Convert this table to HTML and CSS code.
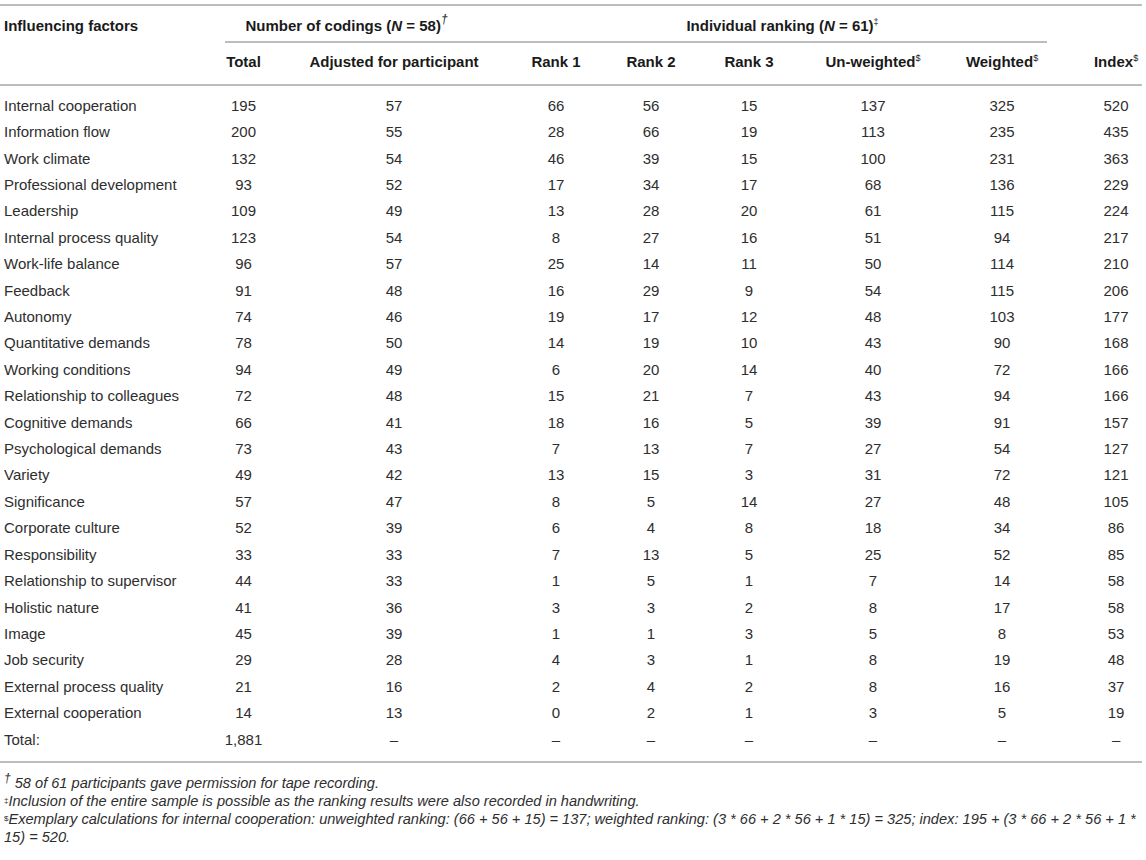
FILE: index.html
```html
<!DOCTYPE html>
<html lang="en">
<head>
<meta charset="utf-8">
<title>Influencing factors</title>
<link rel="stylesheet" href="styles.css">
</head>
<body>
<div class="page">
<table class="data">
  <colgroup>
    <col class="c-name"><col class="c-total"><col class="c-adj"><col class="c-r1"><col class="c-r2"><col class="c-r3"><col class="c-uw"><col class="c-w"><col class="c-idx">
  </colgroup>
  <thead>
    <tr class="h1">
      <th class="name" rowspan="2">Influencing factors</th>
      <th class="group" colspan="7">
        <div class="groupline">
          <span class="g1">Number of codings (<i>N</i> = 58)<sup class="dag">†</sup></span>
          <span class="g2">Individual ranking (<i>N</i> = 61)<sup>‡</sup></span>
        </div>
      </th>
      <th class="blank"></th>
    </tr>
    <tr class="h2">
      <th>Total</th>
      <th>Adjusted for participant</th>
      <th>Rank 1</th>
      <th>Rank 2</th>
      <th>Rank 3</th>
      <th>Un-weighted<sup>$</sup></th>
      <th>Weighted<sup>$</sup></th>
      <th>Index<sup>$</sup></th>
    </tr>
  </thead>
  <tbody>
    <tr><td>Internal cooperation</td><td>195</td><td>57</td><td>66</td><td>56</td><td>15</td><td>137</td><td>325</td><td>520</td></tr>
    <tr><td>Information flow</td><td>200</td><td>55</td><td>28</td><td>66</td><td>19</td><td>113</td><td>235</td><td>435</td></tr>
    <tr><td>Work climate</td><td>132</td><td>54</td><td>46</td><td>39</td><td>15</td><td>100</td><td>231</td><td>363</td></tr>
    <tr><td>Professional development</td><td>93</td><td>52</td><td>17</td><td>34</td><td>17</td><td>68</td><td>136</td><td>229</td></tr>
    <tr><td>Leadership</td><td>109</td><td>49</td><td>13</td><td>28</td><td>20</td><td>61</td><td>115</td><td>224</td></tr>
    <tr><td>Internal process quality</td><td>123</td><td>54</td><td>8</td><td>27</td><td>16</td><td>51</td><td>94</td><td>217</td></tr>
    <tr><td>Work-life balance</td><td>96</td><td>57</td><td>25</td><td>14</td><td>11</td><td>50</td><td>114</td><td>210</td></tr>
    <tr><td>Feedback</td><td>91</td><td>48</td><td>16</td><td>29</td><td>9</td><td>54</td><td>115</td><td>206</td></tr>
    <tr><td>Autonomy</td><td>74</td><td>46</td><td>19</td><td>17</td><td>12</td><td>48</td><td>103</td><td>177</td></tr>
    <tr><td>Quantitative demands</td><td>78</td><td>50</td><td>14</td><td>19</td><td>10</td><td>43</td><td>90</td><td>168</td></tr>
    <tr><td>Working conditions</td><td>94</td><td>49</td><td>6</td><td>20</td><td>14</td><td>40</td><td>72</td><td>166</td></tr>
    <tr><td>Relationship to colleagues</td><td>72</td><td>48</td><td>15</td><td>21</td><td>7</td><td>43</td><td>94</td><td>166</td></tr>
    <tr><td>Cognitive demands</td><td>66</td><td>41</td><td>18</td><td>16</td><td>5</td><td>39</td><td>91</td><td>157</td></tr>
    <tr><td>Psychological demands</td><td>73</td><td>43</td><td>7</td><td>13</td><td>7</td><td>27</td><td>54</td><td>127</td></tr>
    <tr><td>Variety</td><td>49</td><td>42</td><td>13</td><td>15</td><td>3</td><td>31</td><td>72</td><td>121</td></tr>
    <tr><td>Significance</td><td>57</td><td>47</td><td>8</td><td>5</td><td>14</td><td>27</td><td>48</td><td>105</td></tr>
    <tr><td>Corporate culture</td><td>52</td><td>39</td><td>6</td><td>4</td><td>8</td><td>18</td><td>34</td><td>86</td></tr>
    <tr><td>Responsibility</td><td>33</td><td>33</td><td>7</td><td>13</td><td>5</td><td>25</td><td>52</td><td>85</td></tr>
    <tr><td>Relationship to supervisor</td><td>44</td><td>33</td><td>1</td><td>5</td><td>1</td><td>7</td><td>14</td><td>58</td></tr>
    <tr><td>Holistic nature</td><td>41</td><td>36</td><td>3</td><td>3</td><td>2</td><td>8</td><td>17</td><td>58</td></tr>
    <tr><td>Image</td><td>45</td><td>39</td><td>1</td><td>1</td><td>3</td><td>5</td><td>8</td><td>53</td></tr>
    <tr><td>Job security</td><td>29</td><td>28</td><td>4</td><td>3</td><td>1</td><td>8</td><td>19</td><td>48</td></tr>
    <tr><td>External process quality</td><td>21</td><td>16</td><td>2</td><td>4</td><td>2</td><td>8</td><td>16</td><td>37</td></tr>
    <tr><td>External cooperation</td><td>14</td><td>13</td><td>0</td><td>2</td><td>1</td><td>3</td><td>5</td><td>19</td></tr>
    <tr><td>Total:</td><td>1,881</td><td>–</td><td>–</td><td>–</td><td>–</td><td>–</td><td>–</td><td>–</td></tr>
  </tbody>
</table>
<div class="notes">
  <p><sup class="dag">†</sup> 58 of 61 participants gave permission for tape recording.</p>
  <p><sup>‡</sup>Inclusion of the entire sample is possible as the ranking results were also recorded in handwriting.</p>
  <p><sup>$</sup>Exemplary calculations for internal cooperation: unweighted ranking: (66 + 56 + 15) = 137; weighted ranking: (3 * 66 + 2 * 56 + 1 * 15) = 325; index: 195 + (3 * 66 + 2 * 56 + 1 * 15) = 520.</p>
</div>
</div>
</body>
</html>
```

FILE: styles.css
```css
html, body {
  margin: 0;
  padding: 0;
  background: #ffffff;
}

.page {
  width: 1142px;
  padding-top: 4px;
  font-family: "Liberation Sans", Arial, Helvetica, sans-serif;
  color: #2e2e2e;
}

.data {
  width: 1142px;
  table-layout: fixed;
  border-collapse: collapse;
  border-top: 2px solid #bdbdbd;
  border-bottom: 2px solid #bdbdbd;
  font-size: 15px;
}

.c-name { width: 200px; }
.c-total { width: 87px; }
.c-adj { width: 214px; }
.c-r1 { width: 110px; }
.c-r2 { width: 80px; }
.c-r3 { width: 116px; }
.c-uw { width: 132px; }
.c-w { width: 151px; }
.c-idx { width: 52px; }

th {
  font-weight: bold;
  color: #1a1a1a;
  line-height: 18px;
  padding: 0;
  text-align: center;
  white-space: nowrap;
}

th.name {
  text-align: left;
  vertical-align: top;
  padding: 11px 0 0 4px;
  border-bottom: 2px solid #bdbdbd;
}

.h1 th.group,
.h1 th.blank {
  padding-top: 11px;
  vertical-align: top;
}

.groupline {
  display: flex;
  margin: 0 43px 0 25px;
  padding-bottom: 6px;
  border-bottom: 2px solid #bdbdbd;
}

.g1 {
  width: 243px;
  text-align: center;
}

.g2 {
  flex: 1;
  text-align: center;
  padding-left: 50px;
}

.h2 th {
  padding: 10px 0 13px;
  border-bottom: 2px solid #bdbdbd;
}

.h2 th:nth-child(7) {
  padding-right: 25px;
}

sup {
  font-size: 9px;
  line-height: 0;
  vertical-align: 6px;
  font-weight: normal;
}

sup.dag {
  font-style: italic;
  font-size: 12px;
  vertical-align: 8px;
}

td {
  padding: 4px 0;
  line-height: 18.4px;
  text-align: center;
  white-space: nowrap;
}

td:first-child {
  text-align: left;
  padding-left: 4px;
}

td:nth-child(8) {
  padding-right: 25px;
}

tbody tr:first-child td {
  padding-top: 10.8px;
}

tbody tr:last-child td {
  padding-bottom: 11.8px;
}

.notes {
  margin-top: 11px;
  padding-left: 4px;
  font-size: 14.6px;
  font-style: italic;
  line-height: 18px;
  color: #2e2e2e;
}

.notes p {
  margin: 0;
}

.notes sup {
  font-size: 8px;
  vertical-align: 3px;
  font-style: normal;
}

.notes sup.dag {
  font-style: italic;
  font-size: 12px;
  vertical-align: 6px;
}
```
